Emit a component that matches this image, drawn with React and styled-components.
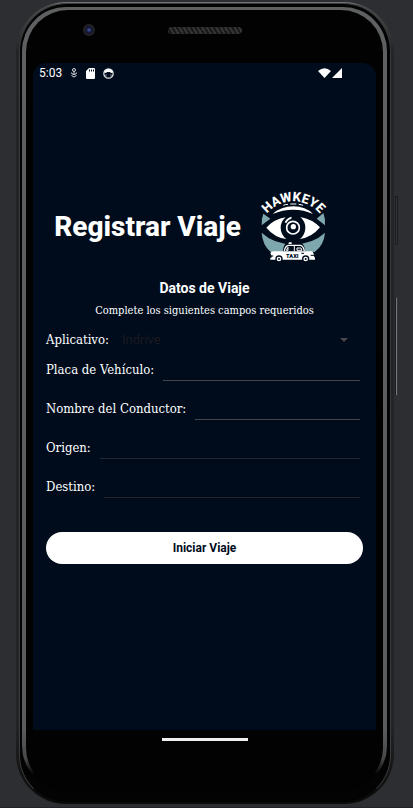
import React from "react";
import styled, { createGlobalStyle } from "styled-components";

const SLAB = '"Roboto Slab", "DejaVu Serif Condensed", "DejaVu Serif", serif';
const NAVY = "#000c1c";

const GlobalStyle = createGlobalStyle`
  *, *::before, *::after { box-sizing: border-box; }
  body { margin: 0; background: #2d2e32; font-family: Roboto, sans-serif; color: #fff; }
`;

const Desk = styled.div`
  min-height: 100vh;
  display: grid;
  grid-template-columns: 16px minmax(0, 1fr) 19px;
  padding: 2px 0 3px;
  border-bottom: 1px solid #222327;
`;

const Shell = styled.div`
  grid-column: 2;
  display: flex;
  border-radius: 50px;
  padding: 1px 3px 1px 3px;
  background: linear-gradient(180deg, #77797a 0, #4a4b4c 4px, #232425 50px, #232425 90%, #0a0a0a 100%);
`;

const Band = styled.div`
  flex: 1;
  display: flex;
  border-radius: 48px;
  padding: 3px 3px 12px 2px;
  border: 1px solid #3a3b3c;
  border-bottom-color: #0c0c0c;
  background: #030303;
`;

const Rim = styled.div`
  flex: 1;
  display: flex;
  border-radius: 44px;
  padding: 3px 4px 0;
  background: linear-gradient(180deg, #5f6061 0, #5a5c5e 92%, #48494a 96%, #020202 98%);
`;

const Glass = styled.div`
  flex: 1;
  min-width: 0;
  display: flex;
  flex-direction: column;
  border-radius: 42px;
  padding: 0 7px;
  background: #020202;
`;

const Forehead = styled.div`
  height: 53px;
  display: grid;
  grid-template-columns: 1fr 74px 1fr;
  align-items: start;
  padding-top: 14px;
`;

const Camera = styled.span`
  width: 12px;
  height: 12px;
  margin-left: 50px;
  border-radius: 50%;
  border: 2px solid #242426;
  background: radial-gradient(circle, #4d5fa8 0, #1d2450 35%, #10121f 70%);
`;

const Speaker = styled.span`
  height: 7px;
  margin-top: 3px;
  border-radius: 4px;
  background: repeating-linear-gradient(60deg, #343434 0 2px, #1a1a1a 2px 4px);
`;

const Screen = styled.main`
  flex: 1;
  border-radius: 13px 13px 0 0;
  background: ${NAVY};
`;

const StatusBar = styled.div`
  display: flex;
  align-items: center;
  justify-content: space-between;
  height: 20px;
  padding: 0 34px 0 6px;
  font-size: 12px;
  line-height: 20px;
`;

const StatusGroup = styled.div`
  display: flex;
  align-items: center;
  gap: ${(p) => p.$gap}px;
`;

const Heading = styled.header`
  display: flex;
  align-items: center;
  justify-content: center;
  gap: 12px;
  padding: 104px 22px 0 0;
`;

const Title = styled.h1`
  margin: 0;
  font-size: 28px;
  line-height: 36px;
  font-weight: 800;
`;

const Logo = styled.svg`
  width: 80px;
  height: 80px;
  flex: none;
`;

const Form = styled.form`
  padding: 11px 13px 0;
`;

const Subtitle = styled.h2`
  margin: 0;
  font-size: 14px;
  line-height: 20px;
  font-weight: 700;
  text-align: center;
`;

const Hint = styled.p`
  margin: 0;
  padding: 3px 0 8px;
  font-family: ${SLAB};
  font-size: 11px;
  line-height: 20px;
  text-align: center;
`;

const Label = styled.label`
  flex: none;
  font-family: ${SLAB};
  font-size: 13px;
  line-height: 20px;
`;

const SelectRow = styled.div`
  display: flex;
  align-items: center;
  gap: 13px;
  height: 22px;
  padding-right: 15px;
`;

const Select = styled.select`
  flex: 1;
  min-width: 0;
  appearance: none;
  border: 0;
  padding: 0;
  background: transparent;
  color: #1b1a20;
  font-family: Roboto, sans-serif;
  font-size: 13px;
  line-height: 20px;
`;

const Row = styled.div`
  display: flex;
  gap: 9px;
  padding: 9px 3px 9px 0;
`;

const Input = styled.input`
  flex: 1;
  min-width: 0;
  height: 21px;
  padding: 0;
  border: 0;
  border-bottom: 1px solid ${(p) => (p.$strong ? "#44444b" : "#24262f")};
  border-radius: 0;
  background: transparent;
  color: #fff;
  font-family: Roboto, sans-serif;
  font-size: 13px;
  outline: none;
`;

const Submit = styled.button`
  display: block;
  width: 100%;
  height: 32px;
  margin-top: 25px;
  border: 0;
  border-radius: 16px;
  background: #fff;
  color: ${NAVY};
  font-family: Roboto, sans-serif;
  font-size: 12px;
  font-weight: 700;
`;

const NavBar = styled.div`
  height: 60px;
  padding-top: 8px;
`;

const HomeHandle = styled.div`
  width: 86px;
  height: 3px;
  margin: 0 auto;
  background: #efefed;
`;

const SideRail = styled.div`
  display: flex;
  flex-direction: column;
  gap: 52px;
  padding: 194px 0 0 1px;
`;

const SideKey = styled.span`
  width: 3px;
  height: ${(p) => p.$length}px;
  border: 1px solid ${(p) => (p.$lit ? "#343538" : "#1b1b1d")};
  border-left-color: #1b1b1d;
  background: ${(p) => (p.$lit ? "#77787a" : "#343538")};
`;

const FIELDS = [
  { id: "placa", label: "Placa de Vehículo:", strong: true },
  { id: "conductor", label: "Nombre del Conductor:", strong: true },
  { id: "origen", label: "Origen:", strong: false },
  { id: "destino", label: "Destino:", strong: false },
];

function HawkeyeLogo() {
  return (
    <Logo viewBox="39 51 240 240" role="img" aria-label="Hawkeye Taxi">
      <defs>
        <path id="arch" d="M57 197 A103 103 0 0 1 263 197" />
      </defs>
      <g fill="#7fa7ae">
        <path d="M70 131 L91 146 L65 166 Q64 146 70 131Z" />
        <path d="M250 129 L230 146 L255 166 Q257 147 250 129Z" />
        <path d="M65 188 Q101 222 160 223 Q219 222 255 188 Q252 225 224 246 L92 246 Q67 224 65 188Z" />
      </g>
      <text fill="#fff" fontFamily="Roboto, sans-serif" fontWeight="800" fontSize="39" textAnchor="middle">
        <textPath href="#arch" startOffset="50%">HAWKEYE</textPath>
      </text>
      <g fill="#fff">
        <path d="M98 132 Q123 109 160 109 Q197 109 219 132 Q191 119 160 119 Q128 119 98 132Z" />
        <path d="M130 106 Q137 103 144 103 M151 102 h18 M176 103 q8 1 13 3" stroke="#fff" strokeWidth="3" fill="none" />
        <path d="M79 173 Q103 147 137 142 Q122 155 122 173 Q122 193 139 207 Q104 203 79 173Z" />
        <path d="M240 172 Q216 147 181 141 Q196 154 196 173 Q196 193 180 207 Q216 202 240 172Z" />
        <path d="M134 157 Q140 143 155 140 L154 146 Q143 149 139 160Z" />
      </g>
      <circle cx="159" cy="173" r="19" fill={NAVY} stroke="#fff" strokeWidth="5" />
      <circle cx="160" cy="170" r="8" fill="#fff" />
      <path d="M128 246 Q130 220 143 218 L145 213 H155 V219 L184 220 Q193 223 196 245Z" fill={NAVY} />
      <path d="M133 243 Q135 229 145 226 H182 Q190 228 193 243" fill="none" stroke="#fff" strokeWidth="4" />
      <path d="M147 217 h8 v5 h-10Z" fill="#fff" />
      <path d="M163 226 v18 M139 241 l5 -9 v9Z M171 241 v-7 h12 l3 7Z" stroke="#fff" strokeWidth="3" fill="none" />
      <path d="M91 249 Q93 244 101 244 H215 Q222 247 222 259 L225 264 V269 H91 V264 L96 261Z" fill="#fff" />
      <path d="M91 258 h9 M212 256 h10 M184 250 h8" stroke={NAVY} strokeWidth="3" />
      <g fill="#fff" stroke={NAVY} strokeWidth="4">
        <circle cx="117" cy="267" r="9" />
        <circle cx="197" cy="267" r="9" />
      </g>
      <g fill={NAVY}>
        <circle cx="117" cy="267" r="3" />
        <circle cx="197" cy="267" r="3" />
      </g>
      <text x="157" y="263" fill={NAVY} fontFamily="Roboto, sans-serif" fontWeight="900" fontSize="17" textAnchor="middle">TAXI</text>
    </Logo>
  );
}

function StatusIcons() {
  return (
    <StatusGroup $gap={8}>
      <svg width="8" height="10" viewBox="0 0 8 10" fill="none" stroke="#d7dadd" aria-hidden="true">
        <circle cx="4" cy="2" r="1.500" />
        <path d="M4 3.500V7 M1.500 4.500Q1.500 6.500 4 6.500T6.500 4.500 M1.500 7.500Q4 10.500 6.500 7.500" />
      </svg>
      <svg width="9" height="11" viewBox="0 0 9 11" aria-hidden="true">
        <path d="M3 0H8Q9 0 9 1V10Q9 11 8 11H1Q0 11 0 10V3Z" fill="#fff" />
        <path d="M3.500 1.500V3.500M5.500 1.500V3.500M7.500 1.500V3.500" stroke={NAVY} />
      </svg>
      <svg width="11" height="11" viewBox="0 0 11 11" aria-hidden="true">
        <circle cx="5.500" cy="5.500" r="4.700" fill="none" stroke="#e6e8ea" strokeWidth="1.200" />
        <path d="M1 4.500Q1.500 1 5.500 1T10 4.500L8 5L7 4H4L3 5Z" fill="#fff" />
        <path d="M2 7L3.500 6V9ZM9 7L7.500 6V9Z" fill="#87909a" />
      </svg>
    </StatusGroup>
  );
}

export default function App() {
  return (
    <>
      <GlobalStyle />
      <Desk>
        <Shell>
          <Band>
            <Rim>
              <Glass>
                <Forehead>
                  <Camera />
                  <Speaker />
                </Forehead>
                <Screen>
                  <StatusBar>
                    <StatusGroup $gap={8}>
                      <span>5:03</span>
                      <StatusIcons />
                    </StatusGroup>
                    <StatusGroup $gap={1}>
                      <svg width="13" height="10" viewBox="0 0 13 10" aria-hidden="true">
                        <path d="M0 3Q6.500 -2.500 13 3L6.500 10Z" fill="#fff" />
                      </svg>
                      <svg width="10" height="10" viewBox="0 0 10 10" aria-hidden="true">
                        <path d="M10 0V10H0Z" fill="#fff" />
                      </svg>
                    </StatusGroup>
                  </StatusBar>
                  <Heading>
                    <Title>Registrar Viaje</Title>
                    <HawkeyeLogo />
                  </Heading>
                  <Form onSubmit={(e) => e.preventDefault()}>
                    <Subtitle>Datos de Viaje</Subtitle>
                    <Hint>Complete los siguientes campos requeridos</Hint>
                    <SelectRow>
                      <Label htmlFor="aplicativo">Aplicativo:</Label>
                      <Select id="aplicativo" defaultValue="Indrive">
                        <option>Indrive</option>
                      </Select>
                      <svg width="8" height="4" viewBox="0 0 8 4" aria-hidden="true">
                        <path d="M0 0H8L4 4Z" fill="#4a484e" />
                      </svg>
                    </SelectRow>
                    {FIELDS.map((f) => (
                      <Row key={f.id}>
                        <Label htmlFor={f.id}>{f.label}</Label>
                        <Input id={f.id} type="text" $strong={f.strong} />
                      </Row>
                    ))}
                    <Submit type="submit">Iniciar Viaje</Submit>
                  </Form>
                </Screen>
                <NavBar>
                  <HomeHandle />
                </NavBar>
              </Glass>
            </Rim>
          </Band>
        </Shell>
        <SideRail>
          <SideKey $length={49} />
          <SideKey $length={99} $lit />
        </SideRail>
      </Desk>
    </>
  );
}
